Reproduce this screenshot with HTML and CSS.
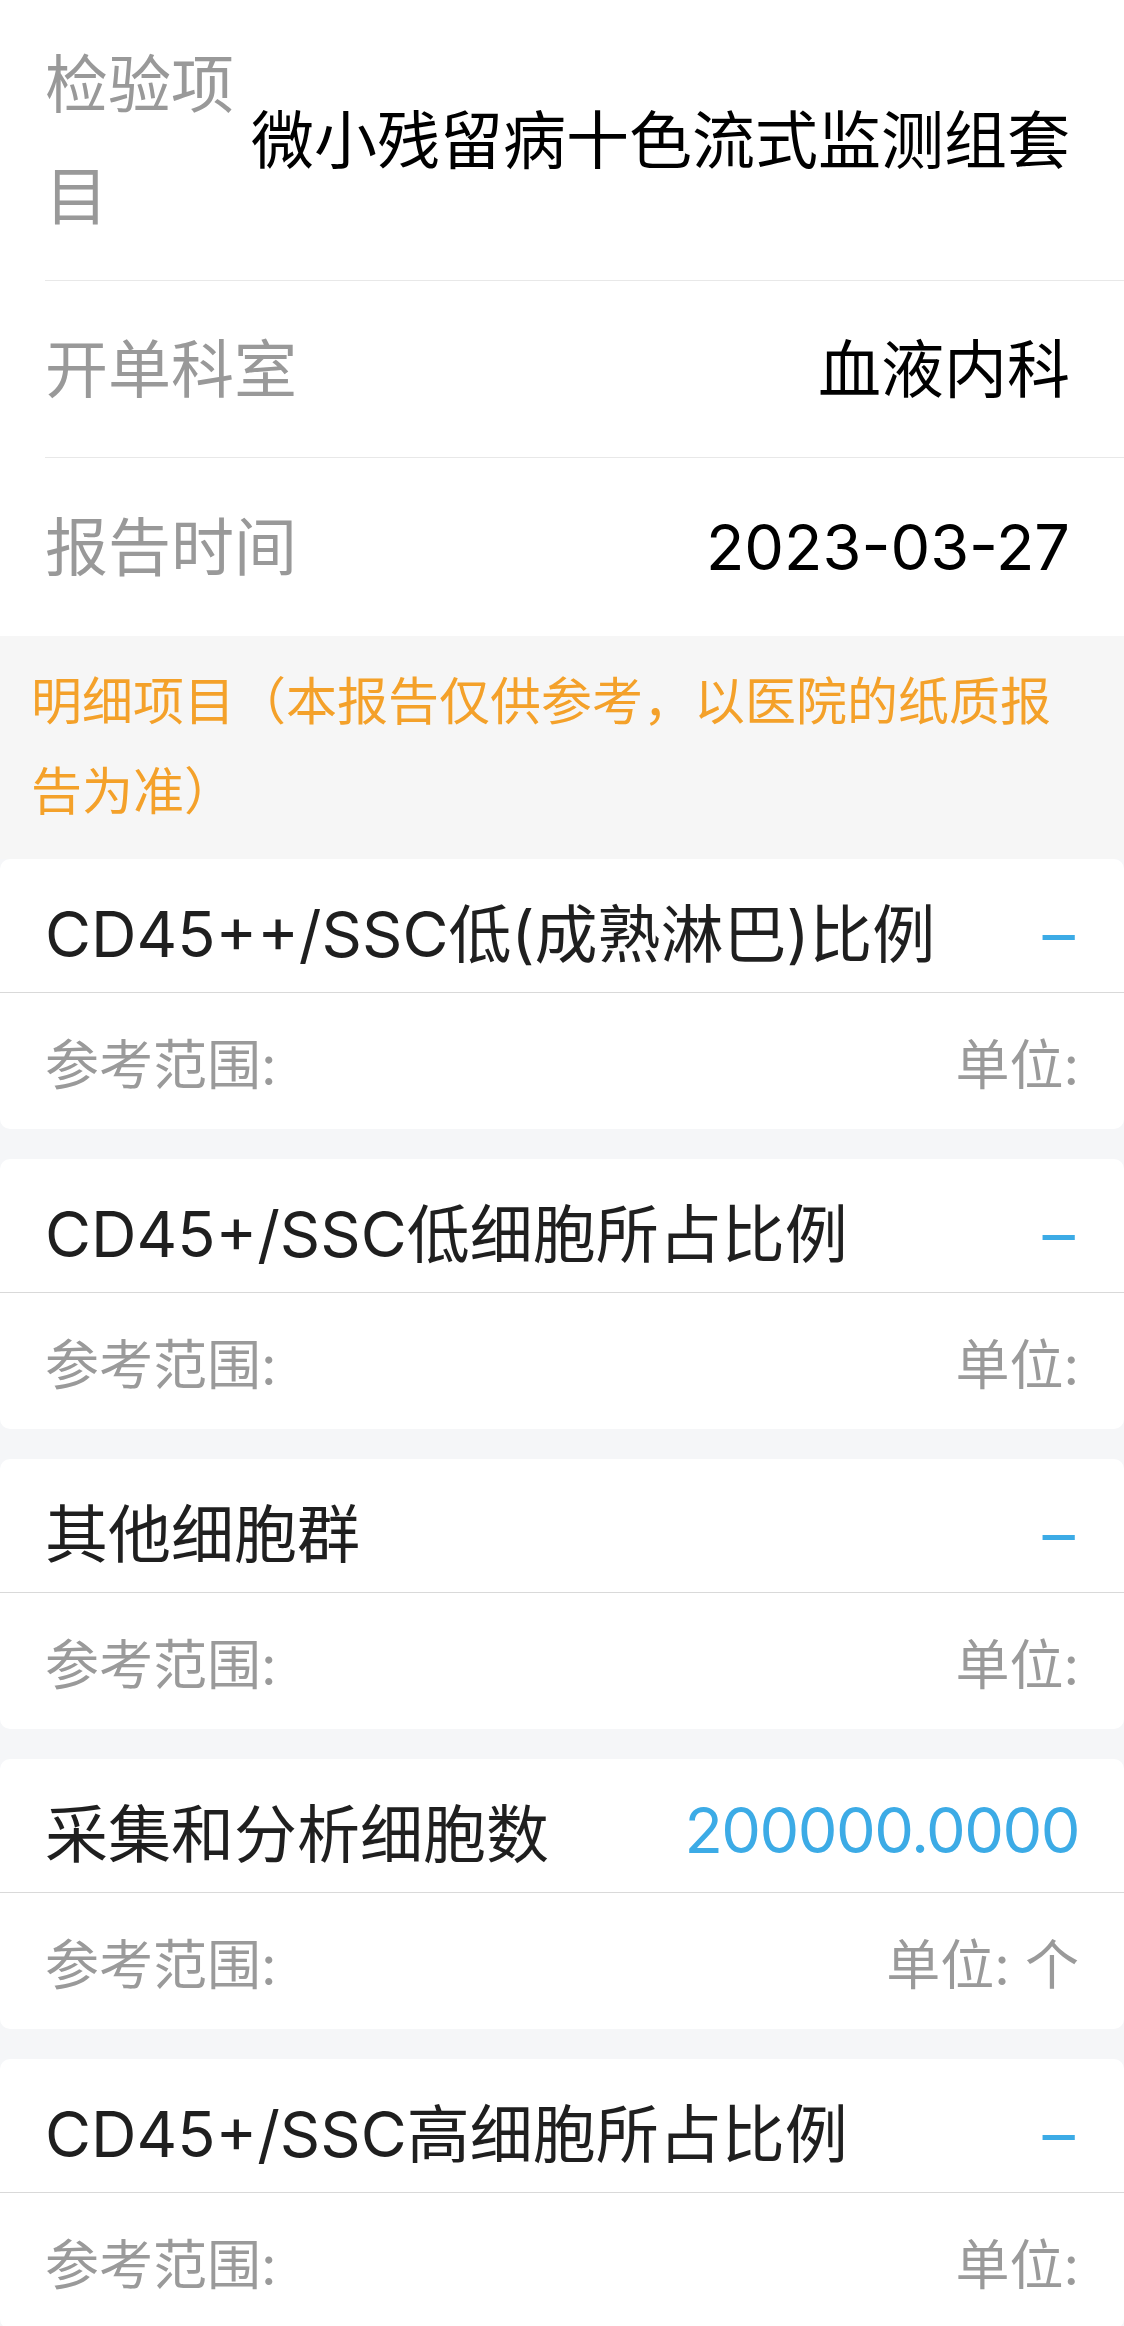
FILE: index.html
```html
<!DOCTYPE html>
<html lang="zh-CN">
<head>
<meta charset="utf-8">
<title>检验报告</title>
<link rel="stylesheet" href="styles.css">
</head>
<body>
<div class="page">
  <section class="info">
    <div class="info-row">
      <div class="info-label">检验项目</div>
      <div class="info-value">微小残留病十色流式监测组套</div>
    </div>
    <div class="info-row">
      <div class="info-label">开单科室</div>
      <div class="info-value">血液内科</div>
    </div>
    <div class="info-row">
      <div class="info-label">报告时间</div>
      <div class="info-value">2023-03-27</div>
    </div>
  </section>

  <div class="notice">明细项目（本报告仅供参考，以医院的纸质报告为准）</div>

  <div class="items">
    <div class="item-card">
      <div class="item-head">
        <span class="item-name">CD45++/SSC低(成熟淋巴)比例</span>
        <span class="item-result"><span class="dash">-</span></span>
      </div>
      <div class="item-foot">
        <span>参考范围:</span>
        <span>单位:</span>
      </div>
    </div>
    <div class="item-card">
      <div class="item-head">
        <span class="item-name">CD45+/SSC低细胞所占比例</span>
        <span class="item-result"><span class="dash">-</span></span>
      </div>
      <div class="item-foot">
        <span>参考范围:</span>
        <span>单位:</span>
      </div>
    </div>
    <div class="item-card">
      <div class="item-head">
        <span class="item-name">其他细胞群</span>
        <span class="item-result"><span class="dash">-</span></span>
      </div>
      <div class="item-foot">
        <span>参考范围:</span>
        <span>单位:</span>
      </div>
    </div>
    <div class="item-card">
      <div class="item-head">
        <span class="item-name">采集和分析细胞数</span>
        <span class="item-result">200000.0000</span>
      </div>
      <div class="item-foot">
        <span>参考范围:</span>
        <span>单位: 个</span>
      </div>
    </div>
    <div class="item-card">
      <div class="item-head">
        <span class="item-name">CD45+/SSC高细胞所占比例</span>
        <span class="item-result"><span class="dash">-</span></span>
      </div>
      <div class="item-foot">
        <span>参考范围:</span>
        <span>单位:</span>
      </div>
    </div>
  </div>
</div>
</body>
</html>
```

FILE: styles.css
```css
html, body {
  margin: 0;
  padding: 0;
}

body {
  background: #f5f6f8;
  font-family: Inter, "Noto Sans CJK SC", sans-serif;
}

.info {
  background: #ffffff;
  padding-left: 45px;
}

.info-row {
  display: flex;
  align-items: center;
  box-sizing: border-box;
  min-height: 177px;
  padding: 28px 54px 28px 0;
  border-bottom: 1px solid #e8e8e8;
}

.info-row:last-child {
  border-bottom: none;
  min-height: 178px;
}

.info-label {
  flex: 1 1 auto;
  min-width: 0;
  font-size: 63px;
  line-height: 112px;
  color: #999999;
}

.info-value {
  flex: 0 0 auto;
  text-align: right;
  font-size: 63px;
  line-height: 112px;
  color: #000000;
}

.notice {
  background: #f6f6f6;
  padding: 21px 32px 22px 31px;
  font-size: 51px;
  line-height: 90px;
  color: #f4a12a;
}

.items {
  display: flex;
  flex-direction: column;
  gap: 30px;
}

.item-card {
  background: #ffffff;
  border-radius: 10px;
}

.item-head {
  box-sizing: border-box;
  height: 134px;
  padding: 8px 45px 0 45px;
  display: flex;
  align-items: center;
  justify-content: space-between;
  border-bottom: 1px solid #d9d9d9;
  font-size: 63px;
  color: #1f1f1f;
}

.item-result {
  color: #3cabe6;
  white-space: nowrap;
  letter-spacing: -1.5px;
}

.dash {
  display: inline-block;
  transform: translateY(4px) scaleX(1.6);
  transform-origin: right center;
}

.item-foot {
  height: 136px;
  padding: 0 45px;
  display: flex;
  align-items: center;
  justify-content: space-between;
  font-size: 54px;
  color: #9a9a9a;
}
```
